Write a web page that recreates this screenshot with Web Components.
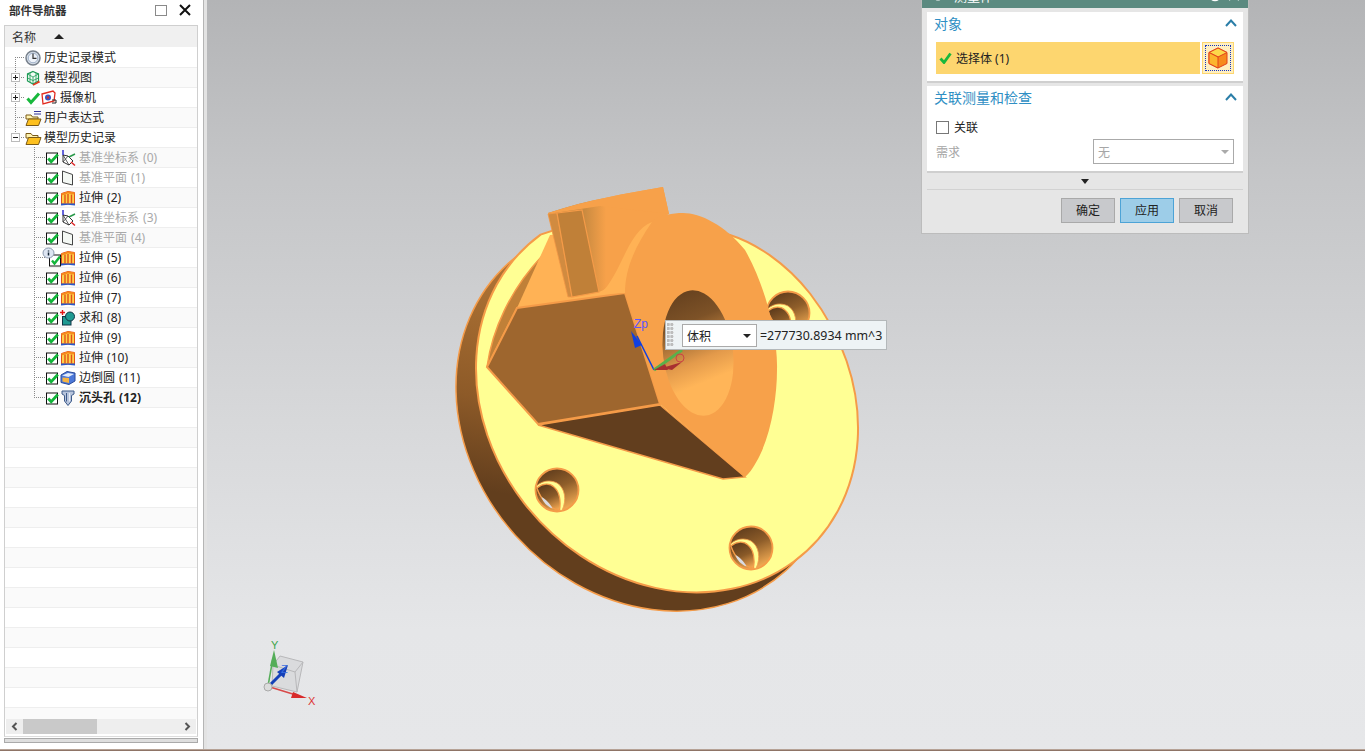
<!DOCTYPE html>
<html><head><meta charset="utf-8"><title>NX</title>
<style>
html,body{margin:0;height:751px;overflow:hidden;background:#e6e7e9;font:12px "Noto Sans","Noto Sans CJK SC",sans-serif;}
</style></head><body>
<app-shell>
<nav-panel slot="left">
  <tree-row lvl="0" v="start"><nx-icon slot="i" name="clock"></nx-icon>历史记录模式</tree-row>
  <tree-row lvl="0" v="full" exp="+"><nx-icon slot="i" name="view"></nx-icon>模型视图</tree-row>
  <tree-row lvl="0" v="full" exp="+"><nx-icon slot="i" name="tick"></nx-icon><nx-icon slot="i" name="camera"></nx-icon>摄像机</tree-row>
  <tree-row lvl="0" v="full"><nx-icon slot="i" name="folderx"></nx-icon>用户表达式</tree-row>
  <tree-row lvl="0" v="end" exp="-"><nx-icon slot="i" name="folder"></nx-icon>模型历史记录</tree-row>
  <tree-row lvl="1" v="full" tone="dim"><nx-icon slot="i" w="14" name="chk"></nx-icon><nx-icon slot="i" name="csys"></nx-icon>基准坐标系 (0)</tree-row>
  <tree-row lvl="1" v="full" tone="dim"><nx-icon slot="i" w="14" name="chk"></nx-icon><nx-icon slot="i" name="plane"></nx-icon>基准平面 (1)</tree-row>
  <tree-row lvl="1" v="full"><nx-icon slot="i" w="14" name="chk"></nx-icon><nx-icon slot="i" name="ext"></nx-icon>拉伸 (2)</tree-row>
  <tree-row lvl="1" v="full" tone="dim"><nx-icon slot="i" w="14" name="chk"></nx-icon><nx-icon slot="i" name="csys"></nx-icon>基准坐标系 (3)</tree-row>
  <tree-row lvl="1" v="full" tone="dim"><nx-icon slot="i" w="14" name="chk"></nx-icon><nx-icon slot="i" name="plane"></nx-icon>基准平面 (4)</tree-row>
  <tree-row lvl="1" v="full"><nx-icon slot="i" w="14" name="info"></nx-icon><nx-icon slot="i" name="ext"></nx-icon>拉伸 (5)</tree-row>
  <tree-row lvl="1" v="full"><nx-icon slot="i" w="14" name="chk"></nx-icon><nx-icon slot="i" name="ext"></nx-icon>拉伸 (6)</tree-row>
  <tree-row lvl="1" v="full"><nx-icon slot="i" w="14" name="chk"></nx-icon><nx-icon slot="i" name="ext"></nx-icon>拉伸 (7)</tree-row>
  <tree-row lvl="1" v="full"><nx-icon slot="i" w="14" name="chk"></nx-icon><nx-icon slot="i" name="union"></nx-icon>求和 (8)</tree-row>
  <tree-row lvl="1" v="full"><nx-icon slot="i" w="14" name="chk"></nx-icon><nx-icon slot="i" name="ext"></nx-icon>拉伸 (9)</tree-row>
  <tree-row lvl="1" v="full"><nx-icon slot="i" w="14" name="chk"></nx-icon><nx-icon slot="i" name="ext"></nx-icon>拉伸 (10)</tree-row>
  <tree-row lvl="1" v="full"><nx-icon slot="i" w="14" name="chk"></nx-icon><nx-icon slot="i" name="blend"></nx-icon>边倒圆 (11)</tree-row>
  <tree-row lvl="1" v="end" tone="bold"><nx-icon slot="i" w="14" name="chk"></nx-icon><nx-icon slot="i" name="hole"></nx-icon>沉头孔 (12)</tree-row>
</nav-panel>
<model-canvas slot="main">
  <measure-tip></measure-tip>
  <measure-dialog></measure-dialog>
</model-canvas>
</app-shell>
<script>
const CHK='<rect x=".5" y="3" width="11" height="11" fill="#fff" stroke="#111" stroke-width="1"/><path d="M2.200 8.500l3 3.200L11.800 4.500" fill="none" stroke="#12b53a" stroke-width="2.800"/>';
const ICONS={
clock:'<circle cx="8" cy="8" r="7" fill="#d7dfe8" stroke="#77808c" stroke-width="1.500"/><circle cx="8" cy="8" r="4.800" fill="#eef3fa" stroke="#9fb0c8"/><path d="M8 3.500V8.300H11.500" fill="none" stroke="#333" stroke-width="1.200"/>',
view:'<path d="M8 1.500l5.500 2.500v7L8 14l-5.500-3V4z" fill="#f2fbf5" stroke="#1d9a55" stroke-width="1.200"/><path d="M2.500 4L8 7l5.500-3M8 7v7M2.500 8l5.500 2.500 5.500-2.500M5 3v9M11 3v9" fill="none" stroke="#1d9a55" stroke-width=".8"/><path d="M8 15l6-3-1-1" fill="none" stroke="#e5381e" stroke-width="1.400"/>',
tick:'<path d="M2.500 8.500l3.500 4L14 3.500" fill="none" stroke="#18b83c" stroke-width="3"/>',
camera:'<path d="M1 4l11-3 2 2-1 8-11 3z" fill="#fff" stroke="#e22b1f" stroke-width="1.300"/><circle cx="7" cy="7.500" r="3" fill="#3a55c0"/><circle cx="7" cy="7.500" r="1.200" fill="#c83030"/><path d="M11 10h4v3h-4" fill="none" stroke="#222"/>',
folder:'<path d="M1 3.500h5l1.500 2H13V8H1z" fill="#fff3b0" stroke="#7a5a18"/><path d="M1 14.500l2.500-7H16l-2.500 7z" fill="#fdc01f" stroke="#7a5a18"/>',
folderx:'<path d="M1 5h5l1.500 2H13V9H1z" fill="#fff3b0" stroke="#7a5a18"/><path d="M1 15.500l2.500-6.500H16l-2.500 6.500z" fill="#fdc01f" stroke="#7a5a18"/><path d="M9 1.500h7M9 4h7" stroke="#33339a" stroke-width="1"/>',
chk:CHK,
info:'<g transform="translate(3 2)">'+CHK.replace(/<path.*$/,'')+'</g><ellipse cx="2.500" cy="3" rx="5.500" ry="5" fill="#dde5f2" stroke="#8d9ab0"/><path d="M2.500 .5v1M2.500 2.500v3" stroke="#123" stroke-width="1.500"/><path d="M6 10.500l2.500 3L14 6.500" fill="none" stroke="#12b53a" stroke-width="2.400"/>',
csys:'<path d="M3 5v7l6 3 4-4-5-5z" fill="#fff" stroke="#333" stroke-width="1"/><path d="M3 12l5-6M9 15L3 5" fill="none" stroke="#333" stroke-width=".8"/><path d="M3 0v5" stroke="#2222cc" stroke-width="1.400"/><path d="M9 7l6-3" stroke="#2a9a4a" stroke-width="1.400"/><path d="M11 12l4 3.500" stroke="#d22" stroke-width="1.400"/>',
plane:'<path d="M2.500 1l10 3.500V15l-10-2.500z" fill="#f4f8f4" stroke="#444" stroke-width="1"/>',
ext:'<path d="M1.500 3.500L8 1.500l6.500 1V14h-13z" fill="#fdd24a" stroke="#e2501b"/><path d="M1.500 3.500L8 1.500l6.500 1v2L8 3.500 1.500 5.500z" fill="#f78a1d"/><path d="M5 4.500V13.500M8 4V13.500M11.500 4.500V13.500" stroke="#e2501b" stroke-width="1.400"/><path d="M1 13.500h14v2l-7-.8-7 .8z" fill="#2a58c8"/>',
union:'<path d="M0 2.500h5M2.500 0v5" stroke="#e01515" stroke-width="1.400"/><rect x="2.500" y="6.500" width="8.500" height="8.500" fill="#1f9a92" stroke="#134"/><circle cx="10" cy="6.500" r="4.500" fill="#1f9a92" stroke="#134"/>',
blend:'<path d="M1 5l6-3.500 8 1.500v8l-6 3.500-8-2z" fill="#4c78d8" stroke="#2a4a9a"/><path d="M2 5.500l6-2.500 6 1-5.500 3z" fill="#e3ecfa"/><path d="M2.500 7.500L9 8v5l-6.500-1.500z" fill="#f6b341"/>',
hole:'<path d="M2 1h12v3l-2.500 1.500V11l-3.500 4.500L4.500 11V5.500L2 4z" fill="#b7c4dc" stroke="#3d5a8a"/><path d="M6.500 3v8.500" stroke="#3d5a8a"/><path d="M9.500 3v8.500" stroke="#e6edf8"/>'
};
class NxIcon extends HTMLElement{connectedCallback(){if(this.shadowRoot)return;const n=this.getAttribute('name'),w=+this.getAttribute('w')||16;
const s=this.attachShadow({mode:'open'});
s.innerHTML=`<style>:host{display:block;flex:none;width:${w}px;height:16px}svg{display:block;overflow:visible}</style><svg width="${w}" height="16" viewBox="0 0 ${w} 16">${ICONS[n]||''}</svg>`;}}
customElements.define('nx-icon',NxIcon);

class AppShell extends HTMLElement{constructor(){super();this.attachShadow({mode:'open'}).innerHTML=`<style>
:host{display:grid;grid-template-columns:207px 1fr;grid-template-rows:749px 2px;width:1365px;height:751px}
.strip{grid-column:1/3;background:linear-gradient(#c9b9ae,#7b5d4e)}
</style><slot name="left"></slot><slot name="main"></slot><div class="strip"></div>`;}}
customElements.define('app-shell',AppShell);

class NavPanel extends HTMLElement{constructor(){super();this.attachShadow({mode:'open'}).innerHTML=`<style>
:host{display:flex;flex-direction:column;box-sizing:border-box;height:749px;background:#fff;border-right:3px solid #e3e3e3;box-shadow:inset -1px 0 0 #b5b5b5;padding-right:6px;color:#222}
.title{height:25px;flex:none;display:flex;align-items:center;padding:0 7px 5px 9px;box-sizing:border-box;font-size:11.500px;font-weight:700;color:#333}
.title span{flex:1}
.sq{width:10px;height:9px;border:1px solid #8a8a8a;margin-right:12px}
.box{flex:1;min-height:0;margin:0 0 0 4px;border:1px solid #cfcfcf;border-bottom-color:#ddd;display:flex;flex-direction:column}
.head{height:21px;flex:none;margin:0 0 1px 0;background:#f0f0f0;display:flex;align-items:center;padding-left:7px;color:#333;font-size:12px;gap:18px}
.head i{width:0;height:0;border:5px solid transparent;border-top:0;border-bottom:5px solid #222}
.rows{flex:1;min-height:0;overflow:hidden}
.sb{height:15px;flex:none;margin:0 1px 2px;background:#eee;display:flex;align-items:center;justify-content:space-between;position:relative}
.th{position:absolute;left:17px;top:0;width:74px;height:15px;background:#c9c9c9}
.sb svg{margin:0 5px;display:block}
.bar{flex:none;margin:1px 0 6px 4px;background:#dedede;border:1px solid #aaa;box-sizing:content-box;height:3px}
</style>
<div class="title"><span>部件导航器</span><div class="sq"></div><svg width="12" height="12" viewBox="0 0 12 12"><path d="M1 1l10 10M11 1L1 11" stroke="#111" stroke-width="2"/></svg></div>
<div class="box"><div class="head">名称<i></i></div><div class="rows"><slot></slot></div>
<div class="sb"><svg width="7" height="9" viewBox="0 0 7 9"><path d="M5.500 1L2 4.500 5.500 8" fill="none" stroke="#555" stroke-width="2"/></svg><div class="th"></div><svg width="7" height="9" viewBox="0 0 7 9"><path d="M1.500 1L5 4.500 1.500 8" fill="none" stroke="#555" stroke-width="2"/></svg></div></div>
<div class="bar"></div>`;}
connectedCallback(){if(this.dataset.f)return;this.dataset.f=1;for(let i=0;i<17;i++)this.appendChild(document.createElement('tree-row'));}}
customElements.define('nav-panel',NavPanel);

class TreeRow extends HTMLElement{constructor(){super();this.attachShadow({mode:'open'}).innerHTML=`<style>
:host{display:flex;height:20px;box-sizing:border-box;border-bottom:1px solid #eee;align-items:center;color:#222;font-size:12px;white-space:nowrap;word-spacing:1px}
:host(:nth-child(even)){background:#fafafa}
:host([tone=dim]){color:#a9a9a9}
:host([tone=bold]){font-weight:700}
.ind{flex:none;width:0;height:20px;position:relative;margin-top:-1px;--dot:repeating-linear-gradient(#888 0 1px,transparent 1px 2px);--dh:repeating-linear-gradient(90deg,#888 0 1px,transparent 1px 2px)}
:host([lvl="0"]) .ind{width:20px;--x:10px;--hw:9px}
:host([lvl="1"]) .ind{width:41px;--x:29px;--hw:11px}
:host([v]) .ind{background:var(--dot) var(--x) var(--vy,0)/1px var(--vh,20px) no-repeat,var(--dh) var(--x) 10px/var(--hw) 1px no-repeat}
:host([v=start]) .ind{--vy:10px;--vh:10px}
:host([v=end]) .ind{--vh:10px}
.exp{display:none;position:absolute;left:6px;top:5.500px;width:9px;height:9px;box-sizing:border-box;border:1px solid #bbb;background:#fff}
:host([exp]) .exp{display:block}
.exp:before{content:"";position:absolute;left:1px;right:1px;top:3px;height:1px;background:#222}
:host([exp="+"]) .exp:after{content:"";position:absolute;top:1px;bottom:1px;left:3px;width:1px;background:#222}
.ic{display:flex;flex:none}
.tx{margin-left:3px;margin-top:-1px}
</style><div class="ind"><div class="exp"></div></div><div class="ic"><slot name="i"></slot></div><div class="tx"><slot></slot></div>`;}}
customElements.define('tree-row',TreeRow);

const hole=(cx,cy)=>`<g transform="translate(${cx} ${cy})">
<circle r="21.500" fill="url(#hg)" stroke="#f59b48" stroke-width="1.800"/>
<path d="M-20.500 -4C-14 -10 -6 -10 0 -7C8 -2 10 10 5 20.500C-6 20 -17 11 -20.500 -4Z" fill="#ffff94" stroke="#f59b48" stroke-width=".8"/>
<path d="M-20 -2C-14 -7 -7 -7 -3 -3C3 2 4 12 2.500 20C-7 19 -16 10 -20 -2Z" fill="url(#hi)" stroke="#f59b48" stroke-width="1.200"/>
<path d="M-15.500 7C-12 9 -7 13 -4.500 18.500C-10 16.500 -14 12 -15.500 7Z" fill="#d9dbe2"/>
</g>`;
class ModelCanvas extends HTMLElement{constructor(){super();this.attachShadow({mode:'open'}).innerHTML=`<style>
:host{display:block;position:relative;height:749px;overflow:hidden;background:linear-gradient(#b3b4b6 0,#c4c5c7 170px,#d7d8da 420px,#e5e6e8 630px,#e6e7e9 100%)}
svg{position:absolute;left:0;top:0;font:11px "Liberation Sans",sans-serif}
</style>
<svg width="1158" height="749" viewBox="207 0 1158 749">
<defs>
<linearGradient id="hg" x1=".3" y1="0" x2=".75" y2="1"><stop offset="0" stop-color="#5f3c1c"/><stop offset=".45" stop-color="#8f5e2a"/><stop offset="1" stop-color="#ffb558"/></linearGradient>
<linearGradient id="hi" x1=".4" y1="0" x2=".8" y2="1"><stop offset="0" stop-color="#5f3c1c"/><stop offset=".5" stop-color="#8a5a28"/><stop offset="1" stop-color="#f0a550"/></linearGradient>
<linearGradient id="rim" gradientUnits="userSpaceOnUse" x1="470" y1="360" x2="650" y2="600"><stop offset="0" stop-color="#b87a38"/><stop offset=".55" stop-color="#8d5a28"/><stop offset=".85" stop-color="#623e1d"/></linearGradient>
<linearGradient id="bore" x1="0" y1="0" x2=".15" y2="1"><stop offset="0" stop-color="#623e1d"/><stop offset=".3" stop-color="#7d5227"/><stop offset=".62" stop-color="#e39a4b"/><stop offset=".8" stop-color="#ffb558"/></linearGradient>
<linearGradient id="cyl" gradientUnits="userSpaceOnUse" x1="584" y1="0" x2="606" y2="0"><stop offset="0" stop-color="#c98a40"/><stop offset="1" stop-color="#f7a14a"/></linearGradient>
</defs>
<ellipse cx="647" cy="417" rx="207" ry="177" transform="rotate(48 647 417)" fill="url(#rim)" stroke="#f59b48" stroke-width="1.500"/>
<path d="M810 293.500A207 177 48 1 1 540.600 234.600L600 215L690 222L730 235C755 243 785 262 810 293.500Z" fill="#ffff94" stroke="#f59b48" stroke-width="2"/>
${hole(788,313)}
${hole(557,490)}
${hole(751,548)}
<path d="M487 367C492 330 510 290 542 256L552 238L575 262L517 308Z" fill="#c08038" stroke="#f59b48" stroke-width="1.500"/>
<path d="M517 308L550 235L660 225L640 292Z" fill="#ffb255"/>
<path d="M548 213C590 199 625 194 663 187L669 214L650 225C632 245 625 262 615 278C610 286 604 291 598 292L568 297Z" fill="url(#cyl)"/>
<path d="M548 213C590 199 625 194 663 187L669 214L600 206L548 214Z" fill="#f7a14a"/>
<path d="M548 214L557 213L572 297L568 297Z" fill="#d18b40" stroke="#f59b48" stroke-width=".8"/>
<path d="M557 213L582 210L599 292L572 297Z" fill="#c08038" stroke="#f59b48" stroke-width="1.200"/>
<path d="M487 367L517 308L625 293L660 404L538 424Z" fill="#9e662e" stroke="#f59b48" stroke-width="2"/>
<path d="M538 425L660 405L745 477L723 479Z" fill="#623e1e" stroke="#f59b48" stroke-width="1.500"/>
<path d="M683 213C700 213 725 225 745 250C765 285 778 335 777 370C777 395 772 430 760 455C755 465 750 473 745 477L660 404L625 293C620 270 630 240 653 220C662 215 672 213 683 213Z" fill="#f7a14a"/>
<path d="M625 293C625 270 634 248 652 222C636 228 628 248 619 266C613 278 607 288 600 294Z" fill="#ffb255"/>
<ellipse cx="698" cy="353" rx="35" ry="63" transform="rotate(-7 698 353)" fill="url(#bore)"/>
<g fill="none">
<path d="M654 370L637 336" stroke="#1040e0" stroke-width="1.500"/>
<path d="M631 331L642 345L635 348Z" fill="#1040e0"/>
<path d="M654 370L682 350" stroke="#5ab04a" stroke-width="3"/>
<path d="M654 370L665 364L668 370Z" fill="#a83030"/><path d="M662 368L682 362L672 370Z" fill="#a83030"/>
<circle cx="680" cy="358" r="4" stroke="#c44"/>
</g>
<text x="634" y="328" fill="#5a55ff" font-size="12">Zp</text>
<g fill="none">
<path d="M280 656L303 662L297 692L272 686L273 665Z" fill="#dadbdd" stroke="#b8b8ba"/>
<path d="M273 665L295 672L303 662M295 672L297 692" stroke="#b8b8ba"/>
<path d="M268 686L273 658" stroke="#54ad58" stroke-width="1.500"/><path d="M274 650L278 668L270 666Z" fill="#54ad58"/>
<path d="M270 687L296 695" stroke="#d84a4a" stroke-width="1.500"/><path d="M307 698L291 698L293 692Z" fill="#d82a2a"/>
<path d="M269 686L283 672" stroke="#1440b8" stroke-width="3"/><path d="M288 665L284 678L277 672Z" fill="#1440b8"/>
</g>
<circle cx="268" cy="687" r="4" fill="#dcdcdc" stroke="#aaa"/>
<text x="271" y="649" fill="#3ea54a">Y</text><text x="308" y="705" fill="#d33">X</text><text x="281" y="673" fill="#3b6fe0">Z</text>
</svg><slot></slot>`;}}
customElements.define('model-canvas',ModelCanvas);

class MeasureTip extends HTMLElement{constructor(){super();this.attachShadow({mode:'open'}).innerHTML=`<style>
:host{position:absolute;left:458px;top:320px;width:222px;height:30px;box-sizing:border-box;background:#eef3f5;border:1px solid #b4b8ba;display:flex;align-items:center;font-size:12px;color:#222}
.grip{width:7px;height:24px;margin-left:1px;background:radial-gradient(circle at 1.500px 1.500px,#bdbdbd 1.500px,transparent 1.600px) 0 0/3.500px 4px}
.dd{margin-left:8px;width:75px;height:23px;box-sizing:border-box;border:1px solid #aaa;background:#fff;display:flex;align-items:center;padding:1px 4px 0;justify-content:space-between}
.dd i{width:0;height:0;border:4px solid transparent;border-top:4px solid #222;border-bottom:0;margin-right:1px}
.v{margin-left:3px;font-size:12.400px;white-space:nowrap;letter-spacing:.03px}
</style><div class="grip"></div><div class="dd"><span>体积</span><i></i></div><span class="v">=277730.8934 mm^3</span>`;}}
customElements.define('measure-tip',MeasureTip);

class MeasureDialog extends HTMLElement{constructor(){super();this.attachShadow({mode:'open'}).innerHTML=`<style>
:host{position:absolute;left:714px;top:-14px;width:328px;height:248px;box-sizing:border-box;background:#e6e6e6;border:1px solid #bcbcbc;display:flex;flex-direction:column;font-size:12px;color:#222}
.tb{height:21px;flex:none;background:#5b8a80;color:#fff;display:flex;align-items:center;padding:0 8px 5px 10px;gap:6px;box-sizing:border-box;font-size:13px;margin-bottom:4px}
.tb b{font-weight:400;flex:1;margin-left:4px}
.sec{background:#fff;margin:0 5px;border-bottom:2px solid #cfcfcf;box-sizing:border-box}
.s1{height:71px;margin-bottom:3px}.s2{height:87px}
.hd{height:27px;display:flex;align-items:center;justify-content:space-between;padding:0 6px 5px 7px;box-sizing:border-box;color:#2f8fc4;font-size:14px}
.obj{display:flex;margin:3px 9px 0;height:32px;gap:2px}
.sel{flex:1;background:#fdd66f;display:flex;align-items:center;gap:4px;padding:0 0 1px 3px;box-sizing:border-box}
.pick{width:32px;box-sizing:border-box;border:1px solid #fdd66f;background:#ffefc0;padding:2px}
.pick div{height:100%;box-sizing:border-box;border:1px dotted #1536c0;display:flex;align-items:center;justify-content:center}
.cb{display:flex;align-items:center;gap:5px;margin:4px 9px 0;height:20px}
.cb i{width:13px;height:13px;box-sizing:border-box;border:1px solid #777;background:#fff}
.req{display:flex;align-items:center;justify-content:space-between;margin:2px 9px 0;height:25px;color:#a6a6a6}
.dd{width:141px;height:25px;box-sizing:border-box;border:1px solid #aaa;display:flex;align-items:center;justify-content:space-between;padding:0 4px}
.dd i{width:0;height:0;border:4px solid transparent;border-top:4px solid #aaa;border-bottom:0}
.more{height:16px;flex:none;display:flex;align-items:center;justify-content:center;margin:0 5px;border-bottom:1px solid #d2d2d2;padding-bottom:0}
.more i{width:0;height:0;border:4.500px solid transparent;border-top:5px solid #222;border-bottom:0}
.btns{display:flex;justify-content:flex-end;gap:5px;padding:8px 15px 0 0}
.btn{width:54px;height:25px;box-sizing:border-box;border:1px solid #a9a9a9;background:#c8c9cc;display:flex;align-items:center;justify-content:center;padding-bottom:1px}
.btn.on{background:#9dcde8;border-color:#4da3d6}
</style>
<div class="tb"><svg width="12" height="12" viewBox="0 0 12 12"><circle cx="6" cy="6" r="4" fill="none" stroke="#fff" stroke-width="3"/></svg><b>测量体</b>
<svg width="14" height="14" viewBox="0 0 14 14"><circle cx="7" cy="7" r="5.500" fill="none" stroke="#fff" stroke-width="1.500"/></svg><svg width="12" height="12" viewBox="0 0 12 12"><path d="M1 1l10 10M11 1L1 11" stroke="#fff" stroke-width="2"/></svg></div>
<div class="sec s1"><div class="hd">对象<svg width="12" height="8" viewBox="0 0 12 8"><path d="M1 7l5-5.500L11 7" fill="none" stroke="#2b7ea8" stroke-width="2"/></svg></div>
<div class="obj"><div class="sel"><svg width="13" height="12" viewBox="0 0 13 12"><path d="M1.500 6.500l3.500 4L11.500 1.500" fill="none" stroke="#18b83c" stroke-width="2.800"/></svg>选择体 (1)</div>
<div class="pick"><div><svg width="22" height="22" viewBox="0 0 22 22"><path d="M11 1l9 4.500v11L11 21l-9-4.500v-11z" fill="#f78a1d" stroke="#e2401b"/><path d="M11 1l9 4.500L11 10 2 5.500z" fill="#fdd84a" stroke="#e2401b"/><path d="M2 5.500L11 10v11l-9-4.500z" fill="#fcb52d" stroke="#e2401b"/></svg></div></div></div></div>
<div class="sec s2"><div class="hd">关联测量和检查<svg width="12" height="8" viewBox="0 0 12 8"><path d="M1 7l5-5.500L11 7" fill="none" stroke="#2b7ea8" stroke-width="2"/></svg></div>
<div class="cb"><i></i>关联</div><div class="req">需求<div class="dd">无<i></i></div></div></div>
<div class="more"><i></i></div>
<div class="btns"><div class="btn">确定</div><div class="btn on">应用</div><div class="btn">取消</div></div>`;}}
customElements.define('measure-dialog',MeasureDialog);
</script>
</body></html>
